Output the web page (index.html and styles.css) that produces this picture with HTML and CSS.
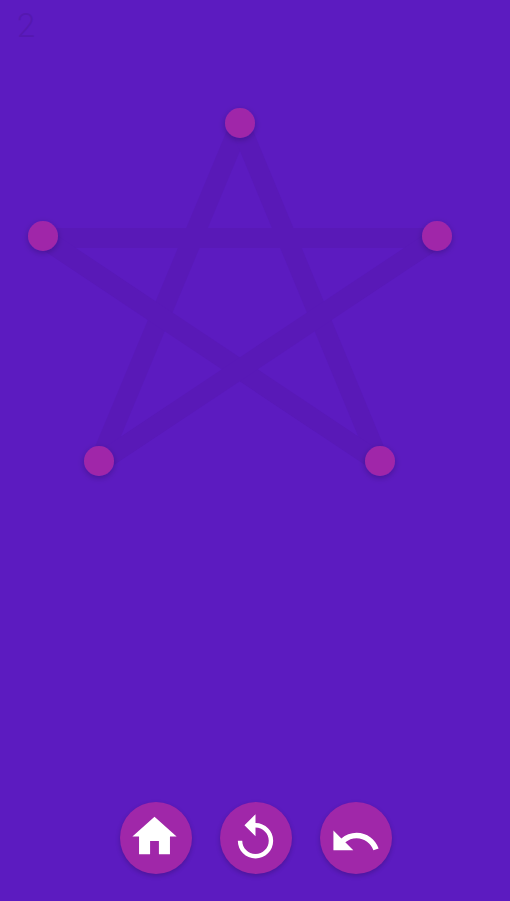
FILE: index.html
```html
<!DOCTYPE html>
<html lang="en">
<head>
  <meta charset="UTF-8">
  <meta name="viewport" content="width=device-width, initial-scale=1.0">
  <title>One Line</title>
  <link rel="stylesheet" href="styles.css">
</head>
<body>
  <div id="game">
    <div id="level">2</div>
    <svg id="board" viewBox="0 0 510 500" width="510" height="500">
      <defs>
        <filter id="dotShadow" x="-50%" y="-50%" width="200%" height="200%">
          <feDropShadow dx="0" dy="2" stdDeviation="3" flood-color="#000" flood-opacity="0.22"/>
        </filter>
      </defs>
      <g class="edges">
        <line x1="240" y1="125" x2="99" y2="463"/>
        <line x1="240" y1="125" x2="380" y2="463"/>
        <line x1="43" y1="238" x2="437" y2="238"/>
        <line x1="43" y1="238" x2="380" y2="463"/>
        <line x1="437" y1="238" x2="99" y2="463"/>
      </g>
      <g class="dots" filter="url(#dotShadow)">
        <circle cx="240" cy="123" r="15"/>
        <circle cx="43" cy="236" r="15"/>
        <circle cx="437" cy="236" r="15"/>
        <circle cx="99" cy="461" r="15"/>
        <circle cx="380" cy="461" r="15"/>
      </g>
    </svg>
    <div id="buttons">
      <button class="round" aria-label="Home">
        <svg class="icon-home" viewBox="0 0 24 24"><path d="M10 20v-6h4v6h5v-8h3L12 3 2 12h3v8z"/></svg>
      </button>
      <button class="round" aria-label="Restart">
        <svg class="icon-restart" viewBox="0 0 24 24"><path d="M12 5V1L7 6l5 5V7c3.31 0 6 2.69 6 6s-2.69 6-6 6-6-2.69-6-6H4c0 4.42 3.58 8 8 8s8-3.58 8-8-3.58-8-8-8z"/></svg>
      </button>
      <button class="round" aria-label="Undo">
        <svg class="icon-undo" viewBox="0 0 24 24"><path d="M12.5 8c-2.65 0-5.05.99-6.9 2.6L2 7v9h9l-3.62-3.62c1.39-1.16 3.16-1.88 5.12-1.88 3.54 0 6.55 2.31 7.6 5.5l2.37-.78C21.08 11.03 17.15 8 12.5 8z"/></svg>
      </button>
    </div>
  </div>
</body>
</html>
```

FILE: styles.css
```css
html, body {
  margin: 0;
  padding: 0;
  height: 100%;
  overflow: hidden;
  background-color: #5c1bc0;
}

#game {
  height: 901px;
  display: flex;
  flex-direction: column;
  position: relative;
}

#level {
  position: absolute;
  top: 7px;
  left: 17px;
  font-family: Roboto, sans-serif;
  font-weight: 300;
  font-size: 33px;
  line-height: 38px;
  color: #5518b0;
}

#board {
  display: block;
}

.edges line {
  stroke: #5919b7;
  stroke-width: 20;
  stroke-linecap: butt;
}

.dots circle {
  fill: #a027a9;
}

#buttons {
  margin-top: auto;
  padding: 0 0 27px 2px;
  display: flex;
  justify-content: center;
  gap: 28px;
}

.round {
  width: 72px;
  height: 72px;
  padding: 0;
  border: none;
  border-radius: 50%;
  background-color: #a027a9;
  box-shadow: 0 2px 5px rgba(0, 0, 0, 0.2);
  display: flex;
  align-items: center;
  justify-content: center;
  cursor: pointer;
}

.round svg {
  width: 53px;
  height: 53px;
  fill: #fff;
}

.icon-home {
  margin: 0 4px 3px 0;
}

.icon-restart {
  margin: 0 1px 0 0;
}

.icon-undo {
  margin: 6px 1px 0 0;
}
```
